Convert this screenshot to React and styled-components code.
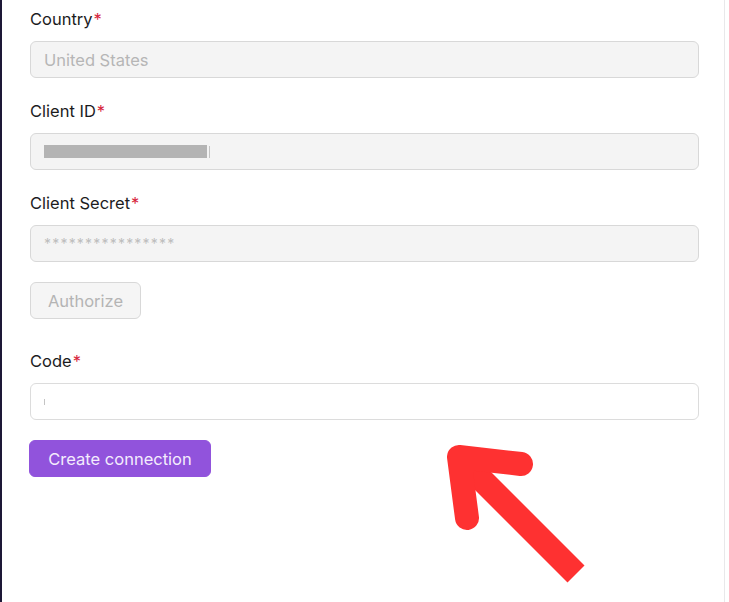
import React from "react";
import styled, { createGlobalStyle } from "styled-components";

const GlobalStyle = createGlobalStyle`
  html, body {
    margin: 0;
    padding: 0;
    background: #ffffff;
  }
  body {
    font-family: Inter, "Noto Sans", "Liberation Sans", sans-serif;
    -webkit-font-smoothing: antialiased;
  }
`;

const Page = styled.div`
  position: relative;
  width: 729px;
  height: 602px;
  overflow: hidden;
  background: #ffffff;
`;

const Panel = styled.div`
  width: 694px;
  height: 602px;
  box-sizing: content-box;
  border-left: 2px solid #1d1836;
  border-right: 1px solid #e8e8ea;
  padding: 7px 0 0 28px;
  display: flex;
  flex-direction: column;
`;

const Field = styled.div`
  display: flex;
  flex-direction: column;
  gap: 10px;
  margin-bottom: ${(p) => p.$after || 21}px;
`;

const Label = styled.label`
  font-size: 16.5px;
  line-height: 24px;
  color: #1c1c1e;
`;

const Required = styled.span`
  color: #d7263d;
  margin-left: 1px;
`;

const Input = styled.div`
  width: 669px;
  height: 37px;
  box-sizing: border-box;
  border: 1px solid ${(p) => (p.$active ? "#dcdcdc" : "#d8d8d8")};
  border-radius: 6px;
  background: ${(p) => (p.$active ? "#ffffff" : "#f4f4f4")};
  padding: 0 13px;
  display: flex;
  align-items: center;
  font-size: 16.5px;
  color: #b6b6b6;
`;

const Masked = styled.span`
  letter-spacing: 1.2px;
  font-size: 14px;
  color: #bdbdbd;
`;

const Redacted = styled.span`
  display: inline-block;
  width: 163px;
  height: 13px;
  background: #b4b4b4;
  margin-right: 2px;
`;

const Caret = styled.span`
  display: inline-block;
  width: 1px;
  height: ${(p) => p.$h || 11}px;
  background: #c4c4c4;
`;

const Button = styled.button`
  height: 37px;
  box-sizing: border-box;
  border-radius: 6px;
  font-family: inherit;
  font-size: 16.5px;
  padding: 0;
  align-self: flex-start;
  margin-bottom: ${(p) => p.$after || 0}px;
  border: 1px solid ${(p) => (p.$primary ? "#9153dc" : "#d8d8d8")};
  background: ${(p) => (p.$primary ? "#9153dc" : "#f5f5f5")};
  color: ${(p) => (p.$primary ? "#f4ecfd" : "#b4b4b4")};
  width: ${(p) => p.$w}px;
  margin-left: ${(p) => p.$shift || 0}px;
`;

const ArrowLayer = styled.svg`
  position: absolute;
  left: 0;
  top: 0;
  pointer-events: none;
`;

const Arrow = () => (
  <ArrowLayer width="729" height="602" viewBox="0 0 729 602">
    <g stroke="#fe3131" strokeWidth="24" fill="none">
      <line x1="466" y1="464" x2="576" y2="574" strokeLinecap="butt" />
      <polyline
        points="521,464 459,457 467,518"
        strokeLinecap="round"
        strokeLinejoin="round"
      />
    </g>
  </ArrowLayer>
);

export default function App() {
  return (
    <>
      <GlobalStyle />
      <Page>
        <Panel>
          <Field>
            <Label>
              Country<Required>*</Required>
            </Label>
            <Input>United States</Input>
          </Field>
          <Field>
            <Label>
              Client ID<Required>*</Required>
            </Label>
            <Input>
              <Redacted />
              <Caret $h={12} />
            </Input>
          </Field>
          <Field $after={20}>
            <Label>
              Client Secret<Required>*</Required>
            </Label>
            <Input>
              <Masked>****************</Masked>
            </Input>
          </Field>
          <Button $w={111} $after={30}>
            Authorize
          </Button>
          <Field $after={20}>
            <Label>
              Code<Required>*</Required>
            </Label>
            <Input $active>
              <Caret $h={6} />
            </Input>
          </Field>
          <Button $primary $w={182} $shift={-1}>
            Create connection
          </Button>
        </Panel>
        <Arrow />
      </Page>
    </>
  );
}
